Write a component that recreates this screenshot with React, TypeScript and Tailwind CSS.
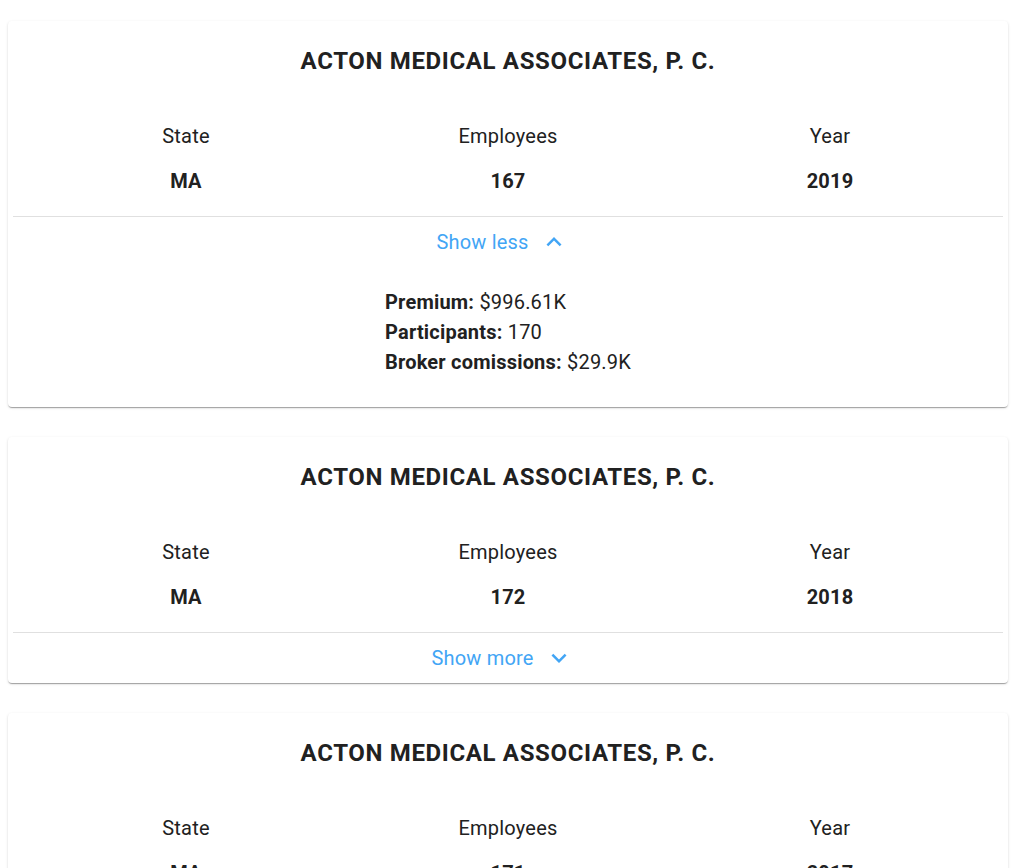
import { useState } from "react";

type Record = {
  name: string;
  state: string;
  employees: number;
  year: number;
  premium: string;
  participants: number;
  commissions: string;
};

const records: Record[] = [
  { name: "ACTON MEDICAL ASSOCIATES, P. C.", state: "MA", employees: 167, year: 2019, premium: "$996.61K", participants: 170, commissions: "$29.9K" },
  { name: "ACTON MEDICAL ASSOCIATES, P. C.", state: "MA", employees: 172, year: 2018, premium: "$942.10K", participants: 175, commissions: "$28.3K" },
  { name: "ACTON MEDICAL ASSOCIATES, P. C.", state: "MA", employees: 171, year: 2017, premium: "$901.45K", participants: 168, commissions: "$27.1K" },
];

function Chevron({ up }: { up: boolean }) {
  return (
    <svg viewBox="0 0 24 24" className="h-[30px] w-[30px]" fill="currentColor">
      {up ? (
        <path d="m12 8-6 6 1.41 1.41L12 10.83l4.59 4.58L18 14z" />
      ) : (
        <path d="M16.59 8.59 12 13.17 7.41 8.59 6 10l6 6 6-6z" />
      )}
    </svg>
  );
}

function CompanyCard({ record, initialOpen }: { record: Record; initialOpen: boolean }) {
  const [open, setOpen] = useState(initialOpen);
  return (
    <div className="rounded bg-white shadow-[0_2px_1px_-1px_rgba(0,0,0,0.2),0_1px_1px_0_rgba(0,0,0,0.14),0_1px_3px_0_rgba(0,0,0,0.12)]">
      <h2 className="pt-6 text-center text-2xl leading-8 font-bold tracking-[0.65px] text-[#212121]">{record.name}</h2>
      <div className="mt-[44px] grid grid-cols-3 px-[17px] text-center text-xl tracking-[0.2px] text-[#212121]">
        <div>
          <div className="leading-[30px]">State</div>
          <div className="mt-[15px] leading-[30px] font-bold">{record.state}</div>
        </div>
        <div>
          <div className="leading-[30px]">Employees</div>
          <div className="mt-[15px] leading-[30px] font-bold">{record.employees}</div>
        </div>
        <div>
          <div className="leading-[30px]">Year</div>
          <div className="mt-[15px] leading-[30px] font-bold">{record.year}</div>
        </div>
      </div>
      <div className="mx-[5px] mt-[20px] border-t border-[#e0e0e0]" />
      <button
        onClick={() => setOpen(!open)}
        className="flex h-[50px] w-full items-center justify-center gap-[10px] pr-[11px] text-xl tracking-[0.2px] text-[#42a5f5]"
      >
        <span>{open ? "Show less" : "Show more"}</span>
        <Chevron up={open} />
      </button>
      {open && (
        <div className="flex justify-center pt-[20px] pb-[30px]">
          <div className="text-xl leading-[30px] tracking-[0.2px] text-[#212121]">
            <div>
              <span className="font-bold">Premium:</span> {record.premium}
            </div>
            <div>
              <span className="font-bold">Participants:</span> {record.participants}
            </div>
            <div>
              <span className="font-bold">Broker comissions:</span> {record.commissions}
            </div>
          </div>
        </div>
      )}
    </div>
  );
}

export default function App() {
  return (
    <div className="min-h-screen bg-white px-2 pt-[21px] font-['Roboto',sans-serif]">
      <div className="flex w-[1000px] flex-col gap-[30px]">
        {records.map((r, i) => (
          <CompanyCard key={i} record={r} initialOpen={i === 0} />
        ))}
      </div>
    </div>
  );
}
